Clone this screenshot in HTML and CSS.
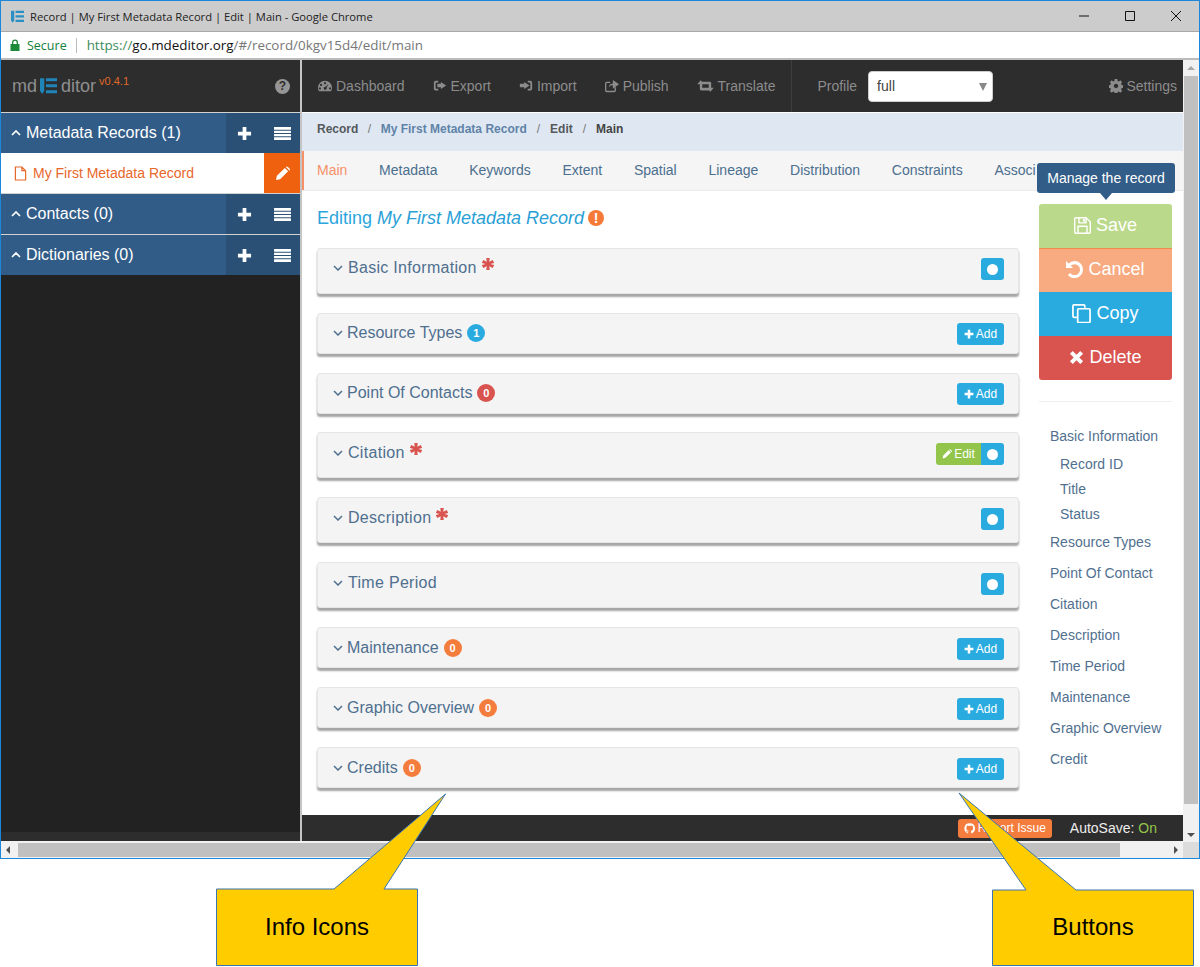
FILE: index.html

```html
<!DOCTYPE html>
<html lang="en">
<head>
    <meta charset="UTF-8">
    <title>Record | My First Metadata Record | Edit | Main</title>
    <link rel="stylesheet" href="styles.css">
</head>
<body>
    <svg class="defs" width="0" height="0">
        <symbol id="i-plus" viewBox="0 0 16 16"><path d="M6 1h4v5h5v4h-5v5H6v-5H1V6h5z"/></symbol>
        <symbol id="i-list" viewBox="0 0 18 16"><path d="M0 1h18v3H0zM0 5h18v2.500H0zM0 8.500h18V11H0zM0 12h18v3H0z"/></symbol>
        <symbol id="i-pencil" viewBox="0 0 16 16"><path d="M1 15l1-4.500L10.500 2 14 5.500 5.500 14zM11.500 1l1-.5q.7 0 1.500.8l1.200 1.200q.8.8.8 1.500l-.5 1z"/></symbol>
        <symbol id="i-file" viewBox="0 0 14 16"><path fill="none" stroke="currentColor" stroke-width="1.300" d="M1.500 1h7l4 4v10h-11zM8.500 1v4h4"/></symbol>
        <symbol id="i-gauge" viewBox="0 0 16 16"><path fill-rule="evenodd" d="M8 2a8 8 0 0 1 8 8q0 2.500-1.200 4H1.200Q0 12.500 0 10a8 8 0 0 1 8-8zM8 3.500a1.200 1.200 0 1 0 .01 0zM3.500 5.500a1.200 1.200 0 1 0 .01 0zM2.200 9.500a1.200 1.200 0 1 0 .01 0zM13.800 9.500a1.200 1.200 0 1 0 .01 0zM12 5.800L8.300 9a1.700 1.700 0 1 0 1.500 1z"/></symbol>
        <symbol id="i-export" viewBox="0 0 16 16"><path d="M6 2H3Q1 2 1 4v7q0 2 2 2h3v-2H3.500Q3 11 3 10.500v-6Q3 4 3.500 4H6zM9 3.500l6 4-6 4V9.500H5v-4h4z"/></symbol>
        <symbol id="i-import" viewBox="0 0 16 16"><path d="M10 2h3q2 0 2 2v7q0 2-2 2h-3v-2h2.500q.5 0 .5-.5v-6q0-.5-.5-.5H10zM6 3.500l6 4-6 4V9.500H1v-4h5z"/></symbol>
        <symbol id="i-share" viewBox="0 0 16 16"><path d="M9 5V1L16 6 9 11V7.300Q5 7 4.500 10 4 5.500 9 5zM0 5q0-2 2-2h4v1.500H2.500q-1 0-1 1v7q0 1 1 1H10q1 0 1-1V10l1.500-1v4q0 2-2 2H2q-2 0-2-2z"/></symbol>
        <symbol id="i-retweet" viewBox="0 0 18 16"><path d="M3.500 1.500L7.500 6H5.300v4H11l2.200 3H4q-1.500 0-1.500-1.500V6H-.5zM14.500 14.500L10.500 10h2.200V6H7L4.800 3H14q1.500 0 1.500 1.500V10h3z"/></symbol>
        <symbol id="i-cog" viewBox="0 0 16 16"><path fill-rule="evenodd" d="M6.500 0h3l.4 2.200 1.300.6L13 1.500 15 3.600l-1.300 1.800.6 1.300 2.200.4v3l-2.200.4-.6 1.300 1.300 1.800-2.100 2-1.800-1.200-1.300.5-.3 2.100h-3l-.4-2.100-1.300-.5-1.800 1.200-2-2 1.200-1.800-.5-1.300-2.200-.4v-3l2.200-.4.5-1.300L1 3.600 3 1.500l1.800 1.300 1.300-.6zM8 5.500a2.500 2.500 0 1 0 .01 0z"/></symbol>
        <symbol id="i-save" viewBox="0 0 18 18"><path fill-rule="evenodd" d="M2 0h11l5 5v11q0 2-2 2H2q-2 0-2-2V2q0-2 2-2zM2 1.500q-.5 0-.5.500v14q0 .5.500.5h1.500V10q0-1 1-1h9q1 0 1 1v6.500H16q.5 0 .5-.5V5.500L13.500 2.300V6q0 1-1 1h-7q-1 0-1-1V1.500zM5 10.500v6h8v-6zM6 1.500V5.500h6V1.500zM9.500 2h2v3h-2z"/></symbol>
        <symbol id="i-undo" viewBox="0 0 18 18"><path d="M0 0l2.700 2.700Q5.300 0 9 0a9 9 0 1 1-7 14.700l2.400-2.100A5.800 5.800 0 1 0 5 5l2.500 2.500H0z"/></symbol>
        <symbol id="i-copy" viewBox="0 0 20 20"><path fill="none" stroke="currentColor" stroke-width="1.800" d="M13.500 4V2q0-1-1-1H2q-1 0-1 1v11q0 1 1 1h3M7 5h11q1 0 1 1v12.500q0 1-1 1H7q-1 0-1-1V6q0-1 1-1z"/></symbol>
        <symbol id="i-times" viewBox="0 0 16 16"><path d="M4 1l4 4 4-4 3 3-4 4 4 4-3 3-4-4-4 4-3-3 4-4-4-4z"/></symbol>
        <symbol id="i-github" viewBox="0 0 16 16"><path d="M8 .5a7.500 7.500 0 0 0-2.400 14.600c.4.100.5-.2.500-.4v-1.300c-2.100.5-2.500-1-2.500-1-.3-.9-.8-1.100-.8-1.100-.7-.5.100-.5.100-.5.800.100 1.200.8 1.200.8.700 1.100 1.800.8 2.300.6.100-.5.300-.8.500-1-1.700-.2-3.400-.8-3.400-3.700 0-.8.300-1.500.8-2-.1-.2-.3-1 .1-2 0 0 .6-.2 2.100.8a7 7 0 0 1 3.800 0c1.400-1 2.100-.8 2.100-.8.400 1 .2 1.800.1 2 .5.500.8 1.200.8 2 0 2.900-1.800 3.500-3.400 3.700.3.200.5.700.5 1.400v2.100c0 .2.100.5.500.4A7.500 7.500 0 0 0 8 .5z"/></symbol>
        <symbol id="i-star" viewBox="0 0 12 12"><path d="M4.300 0h3.400l-.4 3.800 3.400-1.700 1.500 2.800L8.500 6l3.700 1.100-1.500 2.800-3.400-1.700.4 3.800H4.300l.4-3.800-3.400 1.700L-.2 7.100 3.500 6-.2 4.900l1.500-2.800 3.400 1.700z"/></symbol>
        <symbol id="i-down" viewBox="0 0 10 6"><path fill="none" stroke="currentColor" stroke-width="1.500" d="M1 1l4 4 4-4"/></symbol>
        <symbol id="i-up" viewBox="0 0 10 6"><path fill="none" stroke="currentColor" stroke-width="1.700" d="M1 5l4-4 4 4"/></symbol>
        <symbol id="i-logo" viewBox="0 0 20 20"><path d="M0 1h5v15l-2.500 3.500L0 16zM7 1h13v3.500H7zM7 8h13v3.500H7zM7 15h13v3.500H7z"/></symbol>
    </svg>

    <div class="window">
        <div class="titlebar">
            <svg class="tb-logo"><use href="#i-logo"/></svg>
            <span class="tb-title">Record | My First Metadata Record | Edit | Main - Google Chrome</span>
            <div class="tb-controls">
                <svg width="12" height="12" viewBox="0 0 12 12"><path d="M1 6h10" stroke="#111" fill="none"/></svg>
                <svg width="12" height="12" viewBox="0 0 12 12"><path d="M1.500 1.500h9v9h-9z" stroke="#111" fill="none"/></svg>
                <svg width="12" height="12" viewBox="0 0 12 12"><path d="M1 1l10 10M11 1L1 11" stroke="#111" fill="none"/></svg>
            </div>
        </div>
        <div class="addressbar">
            <svg class="lock" width="10" height="12" viewBox="0 0 10 12"><path d="M2 5V3.500a3 3 0 0 1 6 0V5h1.500v7H.5V5zM3.300 5h3.400V3.500a1.700 1.700 0 0 0-3.400 0z"/></svg>
            <span class="secure">Secure</span>
            <span class="url"><span class="url-scheme">https://</span><b>go.mdeditor.org</b>/#/record/0kgv15d4/edit/main</span>
        </div>

        <div class="app">
            <aside class="sidebar">
                <div class="brand">
                    <span class="brand-name">md</span>
                    <svg class="brand-logo"><use href="#i-logo"/></svg>
                    <span class="brand-name">ditor</span>
                    <sup class="brand-version">v0.4.1</sup>
                    <span class="help">?</span>
                </div>
                <div class="side-head">
                    <div class="side-label"><svg class="side-chevron"><use href="#i-up"/></svg>Metadata Records (1)</div>
                    <div class="side-actions"><svg class="act-plus"><use href="#i-plus"/></svg><svg class="act-list"><use href="#i-list"/></svg></div>
                </div>
                <div class="side-item">
                    <div class="side-link"><svg class="file-icon"><use href="#i-file"/></svg>My First Metadata Record</div>
                    <div class="side-edit"><svg><use href="#i-pencil"/></svg></div>
                </div>
                <div class="side-head">
                    <div class="side-label"><svg class="side-chevron"><use href="#i-up"/></svg>Contacts (0)</div>
                    <div class="side-actions"><svg class="act-plus"><use href="#i-plus"/></svg><svg class="act-list"><use href="#i-list"/></svg></div>
                </div>
                <div class="side-head">
                    <div class="side-label"><svg class="side-chevron"><use href="#i-up"/></svg>Dictionaries (0)</div>
                    <div class="side-actions"><svg class="act-plus"><use href="#i-plus"/></svg><svg class="act-list"><use href="#i-list"/></svg></div>
                </div>
                <div class="side-fill"></div>
                <div class="side-foot"></div>
            </aside>

            <div class="main">
                <nav class="topnav">
                    <a class="nav-link nav-dash"><svg><use href="#i-gauge"/></svg>Dashboard</a>
                    <a class="nav-link"><svg><use href="#i-export"/></svg>Export</a>
                    <a class="nav-link"><svg><use href="#i-import"/></svg>Import</a>
                    <a class="nav-link"><svg><use href="#i-share"/></svg>Publish</a>
                    <a class="nav-link nav-translate"><svg><use href="#i-retweet"/></svg>Translate</a>
                    <div class="profile">
                        <span>Profile</span>
                        <div class="select">full<i class="select-arrow"></i></div>
                    </div>
                    <a class="nav-link nav-settings"><svg><use href="#i-cog"/></svg>Settings</a>
                </nav>

                <div class="crumbs">
                    <span>Record</span><i class="crumb-first">/</i>
                    <span class="crumb-link">My First Metadata Record</span><i>/</i>
                    <span>Edit</span><i>/</i>
                    <span class="crumb-last">Main</span>
                </div>

                <div class="tabs">
                    <a class="tab active">Main</a>
                    <a class="tab">Metadata</a>
                    <a class="tab">Keywords</a>
                    <a class="tab">Extent</a>
                    <a class="tab">Spatial</a>
                    <a class="tab">Lineage</a>
                    <a class="tab">Distribution</a>
                    <a class="tab">Constraints</a>
                    <a class="tab">Associ</a>
                </div>

                <div class="content">
                    <section class="form">
                        <h3 class="heading">Editing <em>My First Metadata Record</em><span class="alert-dot">!</span></h3>

                        <div class="panel panel-tall">
                            <div class="panel-title title-big"><svg class="chev"><use href="#i-down"/></svg>Basic Information<svg class="req"><use href="#i-star"/></svg></div>
                            <div class="btns"><span class="btn btn-dot"><i></i></span></div>
                        </div>
                        <div class="panel">
                            <div class="panel-title"><svg class="chev"><use href="#i-down"/></svg>Resource Types<span class="badge badge-blue">1</span></div>
                            <div class="btns"><span class="btn btn-add"><svg><use href="#i-plus"/></svg>Add</span></div>
                        </div>
                        <div class="panel">
                            <div class="panel-title"><svg class="chev"><use href="#i-down"/></svg>Point Of Contacts<span class="badge badge-red">0</span></div>
                            <div class="btns"><span class="btn btn-add"><svg><use href="#i-plus"/></svg>Add</span></div>
                        </div>
                        <div class="panel panel-tall">
                            <div class="panel-title title-big"><svg class="chev"><use href="#i-down"/></svg>Citation<svg class="req"><use href="#i-star"/></svg></div>
                            <div class="btns"><span class="btn btn-edit"><svg><use href="#i-pencil"/></svg>Edit</span><span class="btn btn-dot btn-joined"><i></i></span></div>
                        </div>
                        <div class="panel panel-tall">
                            <div class="panel-title title-big"><svg class="chev"><use href="#i-down"/></svg>Description<svg class="req"><use href="#i-star"/></svg></div>
                            <div class="btns"><span class="btn btn-dot"><i></i></span></div>
                        </div>
                        <div class="panel panel-tall">
                            <div class="panel-title title-big"><svg class="chev"><use href="#i-down"/></svg>Time Period</div>
                            <div class="btns"><span class="btn btn-dot"><i></i></span></div>
                        </div>
                        <div class="panel">
                            <div class="panel-title"><svg class="chev"><use href="#i-down"/></svg>Maintenance<span class="badge badge-orange">0</span></div>
                            <div class="btns"><span class="btn btn-add"><svg><use href="#i-plus"/></svg>Add</span></div>
                        </div>
                        <div class="panel">
                            <div class="panel-title"><svg class="chev"><use href="#i-down"/></svg>Graphic Overview<span class="badge badge-orange">0</span></div>
                            <div class="btns"><span class="btn btn-add"><svg><use href="#i-plus"/></svg>Add</span></div>
                        </div>
                        <div class="panel">
                            <div class="panel-title"><svg class="chev"><use href="#i-down"/></svg>Credits<span class="badge badge-orange">0</span></div>
                            <div class="btns"><span class="btn btn-add"><svg><use href="#i-plus"/></svg>Add</span></div>
                        </div>
                    </section>

                    <aside class="control">
                        <div class="tooltip">Manage the record</div>
                        <div class="action action-save"><svg><use href="#i-save"/></svg>Save</div>
                        <div class="action action-cancel"><svg><use href="#i-undo"/></svg>Cancel</div>
                        <div class="action action-copy"><svg class="copy-icon"><use href="#i-copy"/></svg>Copy</div>
                        <div class="action action-delete"><svg class="times-icon"><use href="#i-times"/></svg>Delete</div>
                        <ul class="page-nav">
                            <li>Basic Information</li>
                            <li class="sub">Record ID</li>
                            <li class="sub">Title</li>
                            <li class="sub">Status</li>
                            <li>Resource Types</li>
                            <li>Point Of Contact</li>
                            <li>Citation</li>
                            <li>Description</li>
                            <li>Time Period</li>
                            <li>Maintenance</li>
                            <li>Graphic Overview</li>
                            <li>Credit</li>
                        </ul>
                    </aside>
                </div>

                <footer class="footer">
                    <span class="report"><svg><use href="#i-github"/></svg>Report Issue</span>
                    <span class="autosave">AutoSave: <b>On</b></span>
                </footer>
            </div>

            <div class="vscroll">
                <i class="arrow-up"></i>
                <div class="vthumb"></div>
                <i class="arrow-down"></i>
            </div>
        </div>

        <div class="hscroll">
            <i class="arrow-left"></i>
            <div class="hthumb"></div>
            <i class="arrow-right"></i>
            <div class="corner"></div>
        </div>
    </div>

    <div class="callout callout-info">
        <svg class="callout-shape" width="202" height="175" viewBox="0 0 202 175"><path d="M.5 98H118L229.500 3 168 98h33.500v76.500H.5z"/></svg>
        <span>Info Icons</span>
    </div>
    <div class="callout callout-buttons">
        <svg class="callout-shape" width="202" height="175" viewBox="0 0 202 175"><path d="M.5 99H34L-33 2 84 99h117.500v75.500H.5z"/></svg>
        <span>Buttons</span>
    </div>
</body>
</html>
```

FILE: styles.css

```css
* {
    margin: 0;
    padding: 0;
    box-sizing: border-box;
}
body {
    background: #fff;
    font-family: "Liberation Sans", Arial, sans-serif;
    font-size: 14px;
    overflow: hidden;
    height: 967px;
    position: relative;
}
svg {
    fill: currentColor;
    flex: none;
    overflow: visible;
}
.defs {
    position: absolute;
}

/* browser chrome */
.window {
    height: 859px;
    border: 1px solid #1c86d9;
    display: flex;
    flex-direction: column;
}
.titlebar {
    height: 31px;
    background: #cccccc;
    border-bottom: 1px solid #a8a8a8;
    display: flex;
    align-items: center;
    padding-left: 10px;
}
.tb-logo {
    width: 13px;
    height: 13px;
    color: #2a8fc4;
    margin-right: 6px;
}
.tb-title {
    font-family: "Open Sans", sans-serif;
    font-size: 11.2px;
    color: #222;
}
.tb-controls {
    margin-left: auto;
    display: flex;
    gap: 34px;
    padding-right: 17px;
}
.addressbar {
    height: 28px;
    background: #fff;
    border-bottom: 2px solid #bbb;
    display: flex;
    align-items: center;
    padding-left: 9px;
    font-family: "Open Sans", sans-serif;
    font-size: 12.5px;
}
.lock {
    color: #1d8a3a;
    margin-right: 7px;
}
.secure {
    color: #14803c;
    padding-right: 9px;
    border-right: 1px solid #bbb;
    margin-right: 10px;
    line-height: 15px;
}
.url {
    color: #777;
    font-size: 13.4px;
}
.url b {
    font-weight: normal;
    color: #111;
}
.url-scheme {
    color: #3d8c5a;
}

/* app */
.app {
    height: 782px;
    display: flex;
    background: #f1f1f1;
}
.sidebar {
    width: 301px;
    flex: none;
    background: #222;
    border-right: 2px solid #c4c4c4;
    display: flex;
    flex-direction: column;
    margin-bottom: 1px;
}
.brand {
    height: 52px;
    background: #2d2d2d;
    display: flex;
    align-items: center;
    padding-left: 11px;
    padding-right: 10px;
    color: #8f8f8f;
    font-size: 18px;
}
.brand-logo {
    width: 17px;
    height: 18px;
    color: #1f84b8;
    margin: 0 4px 0 3px;
}
.brand-version {
    color: #e0682a;
    font-size: 11px;
    margin: -11px 0 0 3px;
}
.help {
    margin-left: auto;
    width: 15px;
    height: 15px;
    border-radius: 50%;
    background: #969696;
    color: #2d2d2d;
    font-size: 12px;
    font-weight: bold;
    line-height: 15px;
    text-align: center;
}
.side-head {
    height: 41px;
    border-top: 1px solid #d2d2d2;
    background: #315c88;
    color: #fff;
    display: flex;
    font-size: 16px;
}
.side-label {
    flex: 1;
    display: flex;
    align-items: center;
    padding-left: 10px;
}
.side-chevron {
    width: 10px;
    height: 6px;
    margin-right: 5px;
}
.side-actions {
    width: 74px;
    background: #2b5075;
    display: flex;
    align-items: center;
}
.act-plus {
    width: 15px;
    height: 15px;
    margin-left: 11px;
}
.act-list {
    width: 17px;
    height: 15px;
    margin-left: 22px;
}
.side-item {
    height: 40px;
    background: #fff;
    display: flex;
    align-items: stretch;
    color: #e8672a;
}
.side-link {
    flex: 1;
    display: flex;
    align-items: center;
    padding-left: 13px;
}
.file-icon {
    width: 13px;
    height: 15px;
    margin-right: 6px;
}
.side-edit {
    width: 36px;
    background: #f0610f;
    color: #fff;
    display: flex;
    align-items: center;
    justify-content: center;
}
.side-edit svg {
    width: 15px;
    height: 15px;
}
.side-fill {
    flex: 1;
}
.side-foot {
    height: 9px;
    background: #2d2d2d;
}

.main {
    flex: 1;
    min-width: 0;
    display: flex;
    flex-direction: column;
    background: #fff;
    margin-bottom: 1px;
}
.topnav {
    height: 52px;
    background: #2d2d2d;
    display: flex;
    align-items: center;
    padding-left: 16px;
    color: #8c8c8c;
    margin-bottom: 1px;
}
.nav-link {
    display: flex;
    align-items: center;
    margin-right: 28px;
    white-space: nowrap;
}
.nav-link svg {
    width: 14px;
    height: 14px;
    margin-right: 4px;
}
.nav-translate svg {
    width: 17px;
}
.profile {
    display: flex;
    align-items: center;
    height: 52px;
    border-left: 1px solid #3e3e3e;
    padding-left: 25px;
    margin-left: -12px;
}
.select {
    width: 125px;
    height: 31px;
    background: #fff;
    border: 1px solid #ccc;
    border-radius: 4px;
    margin-left: 11px;
    padding-left: 8px;
    line-height: 29px;
    color: #444;
    position: relative;
}
.select-arrow {
    position: absolute;
    right: 5px;
    top: 11px;
    border-style: solid;
    border-width: 8px 4px 0;
    border-color: #888 transparent transparent;
}
.nav-settings {
    margin: 0 6px 0 auto;
}
.nav-settings svg {
    margin-right: 3px;
}
.crumbs {
    height: 38px;
    background: #dfe8f2;
    display: flex;
    align-items: center;
    padding: 0 0 6px 15px;
    font-size: 12px;
    font-weight: bold;
    color: #55595c;
}
.crumbs i {
    font-style: normal;
    font-weight: normal;
    color: #777;
    margin: 0 10px;
}
.crumbs .crumb-first {
    margin: 0 9.500px;
}
.crumb-link {
    color: #5f83a8;
}
.crumb-last {
    color: #444;
}
.tabs {
    height: 40px;
    background: #f5f5f5;
    border-bottom: 1px solid #ebebeb;
    display: flex;
    align-items: center;
    padding: 0 0 2px 15px;
    gap: 31.750px;
    color: #4b6f8f;
    white-space: nowrap;
    overflow: hidden;
    box-shadow: inset 2px 0 0 #f79068;
}
.tab.active {
    color: #f79068;
}

.content {
    flex: 1;
    min-height: 0;
    display: flex;
    padding-left: 15px;
    position: relative;
}
.form {
    width: 702px;
    flex: none;
}
.heading {
    font-size: 18px;
    font-weight: normal;
    color: #2ba6dc;
    height: 57px;
    padding-top: 17px;
    display: flex;
    align-items: flex-start;
}
.heading em {
    margin-left: 5px;
    color: #2a9fd6;
}
.alert-dot {
    width: 16px;
    height: 16px;
    border-radius: 50%;
    background: #f57a38;
    color: #fff;
    font-size: 14px;
    font-weight: bold;
    line-height: 16px;
    text-align: center;
    margin: 2px 0 0 4px;
}
.panel {
    height: 41px;
    margin-bottom: 19px;
    background: #f4f4f4;
    border: 1px solid #e6e6e6;
    border-radius: 3px;
    box-shadow: 0 3px 2px #a5a5a5;
    display: flex;
    justify-content: space-between;
    align-items: flex-start;
    padding: 9px 14px 0 15px;
}
.panel:nth-child(4) {
    margin-bottom: 18px;
}
.panel:nth-child(n+5) {
    padding-top: 10px;
}
.panel-tall {
    height: 46px;
}
.panel-title {
    display: flex;
    align-items: center;
    height: 20px;
    font-size: 16px;
    color: #4f6f8f;
}
.title-big {
    letter-spacing: .3px;
    padding-left: 1px;
}
.chev {
    width: 10px;
    height: 6px;
    margin-right: 4px;
}
.title-big .chev {
    margin-left: -1px;
    margin-right: 5px;
}
.req {
    width: 12px;
    height: 12px;
    color: #d9534f;
    margin: -8px 0 0 5px;
}
.badge {
    width: 18px;
    height: 18px;
    border-radius: 50%;
    color: #fff;
    font-size: 11px;
    font-weight: bold;
    line-height: 18px;
    text-align: center;
    margin-left: 5px;
}
.badge-blue {
    background: #29abe0;
}
.badge-red {
    background: #d9534f;
}
.badge-orange {
    background: #f47c3c;
}
.btns {
    display: flex;
}
.btn {
    height: 22px;
    border-radius: 3px;
    color: #fff;
    font-size: 12px;
    display: flex;
    align-items: center;
    justify-content: center;
}
.btn svg {
    width: 10px;
    height: 10px;
    margin-right: 2px;
}
.btn-add {
    width: 47px;
    background: #29abe0;
}
.btn-dot {
    width: 23px;
    background: #29abe0;
}
.btn-dot i {
    width: 11px;
    height: 11px;
    border-radius: 50%;
    background: #fff;
}
.btn-edit {
    width: 45px;
    background: #93c54b;
    border-radius: 3px 0 0 3px;
}
.btn-joined {
    border-radius: 0 3px 3px 0;
}

/* right hand column */
.control {
    width: 133px;
    margin-left: 20px;
    padding-top: 13px;
    flex: none;
}
.tooltip {
    position: absolute;
    top: -28px;
    left: 735px;
    width: 138px;
    height: 30px;
    background: #325d88;
    border-radius: 3px;
    color: #fff;
    font-size: 14px;
    line-height: 31px;
    text-align: center;
}
.tooltip::after {
    content: "";
    position: absolute;
    left: 63px;
    bottom: -7px;
    border-style: solid;
    border-width: 7px 6px 0;
    border-color: #325d88 transparent transparent;
}
.action {
    height: 44px;
    padding-bottom: 2px;
    color: #fff;
    font-size: 18px;
    display: flex;
    align-items: center;
    justify-content: center;
}
.action svg {
    width: 17px;
    height: 17px;
    margin-right: 5px;
}
.action .copy-icon {
    width: 19px;
    height: 19px;
}
.action .times-icon {
    width: 15px;
    height: 15px;
}
.action-save {
    background: #bbd98a;
    border-radius: 3px 3px 0 0;
}
.action-cancel {
    background: #f8aa80;
    border-top: 1px solid #f28a50;
}
.action-copy {
    background: #29abe0;
}
.action-delete {
    background: #d9534f;
    border-radius: 0 0 3px 3px;
}
.page-nav {
    list-style: none;
    margin-top: 21px;
    border-top: 1px solid #eee;
    padding: 19px 0 0 11px;
    color: #51708f;
    white-space: nowrap;
}
.page-nav li {
    height: 31px;
    line-height: 31px;
}
.page-nav .sub {
    height: 25px;
    line-height: 25px;
    padding-left: 10px;
}

.footer {
    height: 26px;
    background: #2d2d2d;
    display: flex;
    align-items: center;
    justify-content: flex-end;
    padding-right: 26px;
}
.report {
    width: 94px;
    height: 19px;
    border-radius: 3px;
    background: #f47c3c;
    color: #fff;
    font-size: 12px;
    display: flex;
    align-items: center;
    justify-content: center;
}
.report svg {
    width: 11px;
    height: 11px;
    margin-right: 3px;
}
.autosave {
    color: #eee;
    margin-left: 18px;
}
.autosave b {
    font-weight: normal;
    color: #93c54b;
}

/* scroll bars */
.vscroll {
    width: 16px;
    flex: none;
    background: #f1f1f1;
    display: flex;
    flex-direction: column;
    align-items: center;
    position: relative;
}
.vthumb {
    width: 14px;
    height: 728px;
    margin-top: 16px;
    background: #c0c0c0;
}
.arrow-up,
.arrow-down,
.arrow-left,
.arrow-right {
    position: absolute;
    border-style: solid;
    width: 0;
    height: 0;
}
.arrow-up {
    top: 6px;
    border-width: 0 4px 4px;
    border-color: transparent transparent #a8a8a8;
}
.arrow-down {
    bottom: 5px;
    border-width: 4px 4px 0;
    border-color: #505050 transparent transparent;
}
.hscroll {
    height: 16px;
    background: #f1f1f1;
    position: relative;
    display: flex;
    align-items: center;
}
.hthumb {
    width: 1102px;
    height: 14px;
    margin-left: 17px;
    background: #c0c0c0;
}
.arrow-left {
    left: 5px;
    top: 4px;
    border-width: 4px 4px 4px 0;
    border-color: transparent #505050 transparent transparent;
}
.arrow-right {
    right: 21px;
    top: 4px;
    border-width: 4px 0 4px 4px;
    border-color: transparent transparent transparent #505050;
}
.corner {
    position: absolute;
    right: 0;
    top: 0;
    width: 16px;
    height: 16px;
    background: #dcdcdc;
}

/* yellow notes drawn over the screenshot */
.callout {
    position: absolute;
    width: 202px;
    height: 77px;
    display: flex;
    align-items: center;
    justify-content: center;
    font-size: 24px;
    color: #000;
}
.callout span {
    position: relative;
    bottom: 1px;
}
.callout-info {
    left: 216px;
    top: 889px;
}
.callout-buttons {
    left: 992px;
    top: 889px;
}
.callout-shape {
    position: absolute;
    left: 0;
    bottom: 0;
    fill: #ffcc00;
    stroke: #3b75b5;
    stroke-width: 1;
}
```
